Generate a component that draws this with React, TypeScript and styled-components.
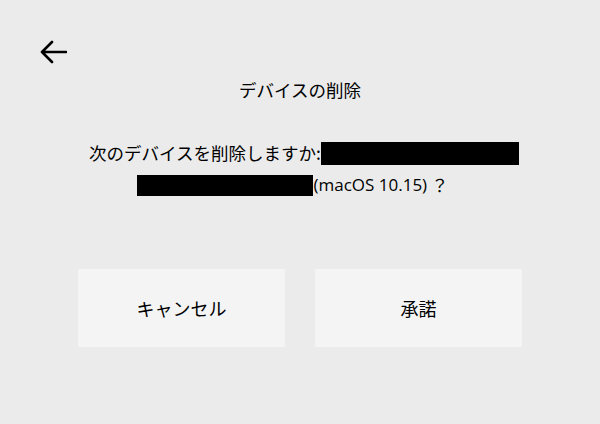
import React from 'react';
import styled, { createGlobalStyle } from 'styled-components';

const GlobalStyle = createGlobalStyle`
  html, body {
    margin: 0;
    padding: 0;
    background: #ebebeb;
  }
  body {
    font-family: 'Noto Sans CJK JP', 'Open Sans', sans-serif;
    color: #000;
  }
`;

const StyledPage = styled.div`
  width: 600px;
  height: 424px;
  box-sizing: border-box;
  background: #ebebeb;
  padding: 40px 0 0;
  display: flex;
  flex-direction: column;
`;

const StyledBackButton = styled.button`
  align-self: flex-start;
  margin-left: 38px;
  width: 30px;
  height: 24px;
  padding: 0;
  border: none;
  background: transparent;
  display: flex;
  align-items: center;
  justify-content: center;
  cursor: pointer;
`;

const StyledTitle = styled.h1`
  margin: 13px 0 0;
  font-size: 17.5px;
  font-weight: 400;
  line-height: 26px;
  text-align: center;
`;

const StyledMessage = styled.div`
  margin-top: 34px;
  display: flex;
  flex-direction: column;
  align-items: center;
  font-size: 17.5px;
  line-height: 32px;
`;

interface ILine {
  $shift: number;
}

const StyledLine = styled.div<ILine>`
  display: flex;
  align-items: center;
  height: 32px;
  transform: translateX(${(props) => props.$shift}px);
`;

interface IRedacted {
  $width: number;
  $height: number;
}

const StyledRedacted = styled.span<IRedacted>`
  display: inline-block;
  width: ${(props) => props.$width}px;
  height: ${(props) => props.$height}px;
  background: #000;
`;

const StyledLatin = styled.span`
  font-family: 'Open Sans', 'Noto Sans CJK JP', sans-serif;
  font-size: 17px;
`;

const StyledActions = styled.div`
  margin-top: 68px;
  display: flex;
  justify-content: center;
  gap: 30px;
`;

const StyledButton = styled.button`
  width: 207px;
  height: 78px;
  border: none;
  background: #f4f4f4;
  font-family: 'Noto Sans CJK JP', sans-serif;
  font-size: 18px;
  color: #000;
  cursor: pointer;
`;

const BackArrow = () => (
  <svg width="28" height="24" viewBox="0 0 28 24" fill="none">
    <path
      d="M27 12H3M13 2L3 12l10 10"
      stroke="#000"
      strokeWidth="2.6"
      strokeLinecap="round"
      strokeLinejoin="round"
    />
  </svg>
);

export default function App() {
  return (
    <>
      <GlobalStyle />
      <StyledPage>
        <StyledBackButton aria-label="戻る">
          <BackArrow />
        </StyledBackButton>
        <StyledTitle>デバイスの削除</StyledTitle>
        <StyledMessage>
          <StyledLine $shift={4}>
            次のデバイスを削除しますか:
            <StyledRedacted $width={198} $height={23} />
          </StyledLine>
          <StyledLine $shift={-7}>
            <StyledRedacted $width={176} $height={21} />
            <StyledLatin>(macOS 10.15)</StyledLatin>
            &nbsp;？
          </StyledLine>
        </StyledMessage>
        <StyledActions>
          <StyledButton>キャンセル</StyledButton>
          <StyledButton>承諾</StyledButton>
        </StyledActions>
      </StyledPage>
    </>
  );
}
